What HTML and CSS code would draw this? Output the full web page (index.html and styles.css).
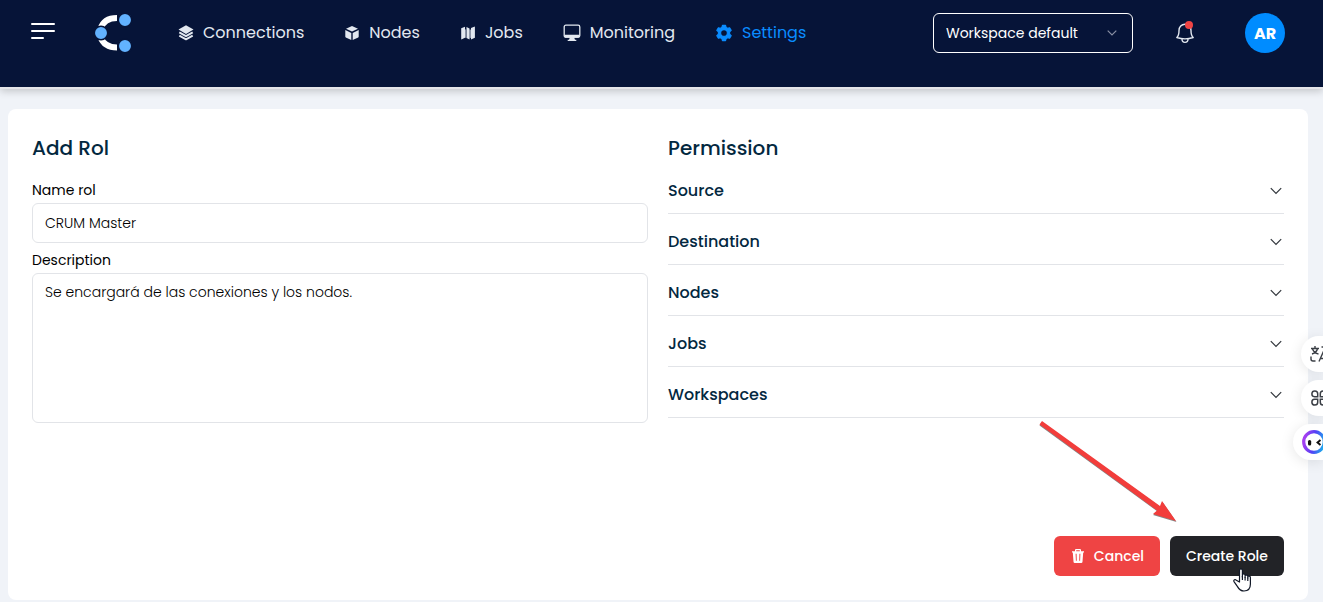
FILE: index.html
```html
<!DOCTYPE html>
<html lang="en">
<head>
<meta charset="utf-8">
<meta name="viewport" content="width=device-width, initial-scale=1">
<title>Add Rol</title>
<link rel="stylesheet" href="styles.css">
</head>
<body>
<header class="topbar">
  <button class="menu-btn" type="button" aria-label="Menu">
    <svg width="24" height="18" viewBox="0 0 24 18" fill="#fff"><rect width="24" height="2" rx="1" y="1"/><rect width="24" height="2" rx="1" y="8"/><rect width="13" height="2" rx="1" y="15"/></svg>
  </button>
  <a class="logo" href="#" aria-label="Home">
    <svg width="38" height="40" viewBox="0 0 38 40">
      <path d="M22 5C13 5 7.500 9 5.500 16M5.500 24C8 31 14 34.500 22 34.500" fill="none" stroke="#fff" stroke-width="6"/>
      <g fill="#62b2ff" stroke="#061438" stroke-width="1.500"><circle cx="30" cy="7" r="6.700"/><circle cx="6" cy="20" r="6.700"/><circle cx="30" cy="33" r="6.700"/></g>
    </svg>
  </a>
  <nav class="nav">
    <a class="nav-link" href="#">
      <svg width="16" height="16" viewBox="0 0 16 16"><path fill="currentColor" d="M8 .3 15.500 4.500 8 8.900.5 4.500z"/><path fill="none" stroke="currentColor" stroke-width="1.900" stroke-linejoin="round" d="M1.300 7.400 8 11.200l6.700-3.800M1.300 10.600 8 14.400l6.700-3.800"/></svg>
      <span>Connections</span>
    </a>
    <a class="nav-link" href="#">
      <svg width="16" height="16" viewBox="0 0 16 16" fill="currentColor"><path d="M8 1l6 2.800L8 6.600 2 3.800z"/><path d="M1.300 5l6 2.900V15l-5.500-2.600a1 1 0 0 1-.5-.9z"/><path d="M14.700 5l-6 2.900V15l5.500-2.600a1 1 0 0 0 .5-.9z"/></svg>
      <span>Nodes</span>
    </a>
    <a class="nav-link" href="#">
      <svg width="16" height="16" viewBox="0 0 16 16" fill="currentColor"><path d="M1.200 3.300 5 1.700v11L1.900 14.300a.5.5 0 0 1-.7-.5z"/><path opacity=".6" d="M5 4.200l1 .4V13l-1-.4z"/><path d="M6.500 1.900 9.500 3.500v11l-3-1.500z"/><path opacity=".6" d="M9.500 4.800l1.500-.4v8.400l-1.500.6z"/><path d="M11 3l3.200-1.300a.5.5 0 0 1 .7.5v10.600L11 14.400z"/></svg>
      <span>Jobs</span>
    </a>
    <a class="nav-link" href="#">
      <svg width="18" height="18" viewBox="0 0 18 18"><rect x="1.200" y="1.200" width="15.600" height="12" rx="1.700" fill="none" stroke="currentColor" stroke-width="1.300"/><path fill="currentColor" d="M1.500 10.700h15v1.500a1.500 1.500 0 0 1-1.500 1.500H3a1.500 1.500 0 0 1-1.500-1.500zM7 13h4l1 2.800h1.300V17H4.700v-1.200H6z"/></svg>
      <span>Monitoring</span>
    </a>
    <a class="nav-link nav-link-active" href="#">
      <svg width="18" height="18" viewBox="0 0 16 16"><path fill="currentColor" fill-rule="evenodd" stroke="currentColor" stroke-linejoin="round" d="M6.600 1.200h2.800l.5 1.800 1.300.8 1.800-.5 1.400 2.300-1.400 1.300v2.200l1.400 1.300-1.400 2.300-1.800-.5-1.300.8-.5 1.800H6.600L6.100 13l-1.300-.8-1.800.5-1.400-2.300L3 9.100V6.900L1.600 5.600 3 3.300l1.800.5L6.100 3zM8 5a3 3 0 1 0 0 6 3 3 0 0 0 0-6z"/></svg>
      <span>Settings</span>
    </a>
  </nav>
  <div class="select-wrap">
    <select class="workspace" aria-label="Workspace"><option>Workspace default</option></select>
    <svg class="select-arrow" width="10" height="6" viewBox="0 0 10 6"><path d="M.7.7 5 5 9.300.7" fill="none" stroke="#8990a4" stroke-width="1.200"/></svg>
  </div>
  <button class="bell" type="button" aria-label="Notifications">
    <svg width="20" height="22" viewBox="0 0 20 22" fill="none" stroke="#e2e8f0" stroke-width="1.400" stroke-linejoin="round" stroke-linecap="round"><path d="M1.800 15.500C4 13.500 4 12 4 8.500 4 5 6.500 2.300 10 2.300S16 5 16 8.500c0 3.500 0 5 2.200 7C13 17.300 7 17.300 1.800 15.500z"/><path d="M7 17c0 4.500 6 4.500 6 0"/></svg>
    <span class="bell-dot"></span>
  </button>
  <button class="avatar" type="button" aria-label="Account">AR</button>
</header>

<main class="card">
  <form class="form">
    <section>
      <h2 class="title">Add Rol</h2>
      <div class="field">
        <label class="label" for="name">Name rol</label>
        <input class="control" id="name" type="text" value="CRUM Master">
      </div>
      <div class="field">
        <label class="label" for="desc">Description</label>
        <textarea class="control control-area" id="desc" spellcheck="false">Se encargará de las conexiones y los nodos.</textarea>
      </div>
    </section>
    <section>
      <h2 class="title title-tight">Permission</h2>
      <button class="row" type="button"><span>Source</span><svg width="12" height="8" viewBox="0 0 12 8"><path d="M.8 1.200 6 6.400l5.200-5.200"/></svg></button>
      <button class="row" type="button"><span>Destination</span><svg width="12" height="8" viewBox="0 0 12 8"><path d="M.8 1.200 6 6.400l5.200-5.200"/></svg></button>
      <button class="row" type="button"><span>Nodes</span><svg width="12" height="8" viewBox="0 0 12 8"><path d="M.8 1.200 6 6.400l5.200-5.200"/></svg></button>
      <button class="row" type="button"><span>Jobs</span><svg width="12" height="8" viewBox="0 0 12 8"><path d="M.8 1.200 6 6.400l5.200-5.200"/></svg></button>
      <button class="row" type="button"><span>Workspaces</span><svg width="12" height="8" viewBox="0 0 12 8"><path d="M.8 1.200 6 6.400l5.200-5.200"/></svg></button>
    </section>
  </form>
  <div class="actions">
    <button class="btn btn-danger" type="button">
      <svg width="12" height="14" viewBox="0 0 12 14"><path fill="#fff" fill-rule="evenodd" d="M0 2.200h3V1.300C3 .5 3.500 0 4.300 0h3.400C8.500 0 9 .5 9 1.300v.9h3v1.200h-.8l-.7 9.400a1.300 1.300 0 0 1-1.300 1.200H2.800a1.300 1.300 0 0 1-1.300-1.200L.8 3.400H0zm4.200 0h3.600V1.200H4.200zM3.600 4.700l.3 7.100h.9l-.2-7.100zm3.800 0-.2 7.100h.9l.3-7.100z"/></svg>
      <span>Cancel</span>
    </button>
    <button class="btn btn-dark" type="button">Create Role</button>
  </div>
  <svg class="arrow" width="140" height="104" viewBox="0 0 140 104">
    <path fill="#868686" d="M4 2 122.500 87 124.500 82 138.500 102 115 95 119.500 91.500 1.500 5.500z"/>
    <path fill="#f23d3b" d="M4 1 122 86 124 81 138 101 115 94 119 90.500 1.500 4.500z"/>
  </svg>
  <svg class="pointer" width="20" height="24" viewBox="0 0 20 24"><path fill="#fff" stroke="#111827" stroke-width="1.200" stroke-linejoin="round" d="M6.500 14V2.500C6.500.4 9.400.4 9.400 2.500V9V7c0-1.400 2.700-1.300 2.700.2V9.200 8c0-1.400 2.700-1.200 2.700.3V10 9c0-1.300 2.600-1.100 2.600.4V16c0 4.500-2.500 7-6.400 7-3.500 0-5-1.600-6.500-4.400L1 13.600c-.8-1.700 1.200-2.600 2.300-1.400z"/><path stroke="#111827" stroke-width="1.200" d="M9.400 8v4M12.100 9v3.500M14.800 9.500v3.500"/></svg>
</main>

<aside class="dock" aria-label="Assistant">
  <button class="dock-btn" type="button" aria-label="Translate">
    <svg width="20" height="18" viewBox="0 0 20 18" fill="none" stroke="#3b3f46" stroke-width="1.400"><path d="M1 3.500h8M5 1v2.500M2 9c3.500-1 5-3 5.500-5.500M2.500 4C3.500 6.500 5.500 8.500 8.500 9M1 11.500V14c0 1.500.8 2 2 2h2.500M11.500 2H14c1.500 0 2 .7 2 2v2M9 16.500l4-9 4 9M10.500 13.500h5"/></svg>
  </button>
  <button class="dock-btn" type="button" aria-label="Apps">
    <svg width="18" height="18" viewBox="0 0 18 18" fill="none" stroke="#3b3f46" stroke-width="1.500"><path d="M7.700 7.700H4.500a2.900 2.900 0 1 1 3.200-2.900zM10.300 7.700h3.200a2.900 2.900 0 1 0-3.200-2.900zM7.700 10.300H4.500a2.900 2.900 0 1 0 3.200 2.900zM10.300 10.300h3.200a2.900 2.900 0 1 1-3.200 2.900z"/></svg>
  </button>
  <button class="dock-btn dock-btn-wide" type="button" aria-label="Chat">
    <svg width="24" height="24" viewBox="0 0 24 24"><defs><linearGradient id="ring" x1="0" y1=".6" x2="1" y2=".8"><stop offset="0" stop-color="#a33ff0"/><stop offset=".45" stop-color="#5340f5"/><stop offset="1" stop-color="#18b8ec"/></linearGradient></defs><circle cx="12" cy="12" r="10.300" fill="#fff" stroke="url(#ring)" stroke-width="3.200"/><rect x="6" y="10" width="3.200" height="5.500" rx="1.500" fill="#111"/><path d="M18.500 10 15.500 12.500l3 2.500" fill="none" stroke="#111" stroke-width="1.900"/></svg>
  </button>
</aside>
</body>
</html>
```
FILE: styles.css
```css
* { box-sizing: border-box; }

body {
  margin: 0;
  min-height: 100vh;
  background: #f0f3f8;
  color: #000;
  font-family: Poppins, Inter, "Liberation Sans", sans-serif;
  font-size: 14px;
  overflow-x: hidden;
}

button, input, select, textarea { font: inherit; color: inherit; }
button { border: 0; padding: 0; background: none; cursor: pointer; }
a { color: inherit; text-decoration: none; }
svg { display: block; flex: none; }

.topbar {
  display: flex;
  align-items: center;
  padding: 13px 38px 34px 31px;
  background: #061438;
  border-bottom: 2px solid #e4e5e9;
  box-shadow: 0 2px 8px rgba(0, 0, 0, .2);
}
.menu-btn { margin-bottom: 4px; }
.logo { margin-left: 40px; }

.nav {
  display: flex;
  gap: 40px;
  margin-left: 45px;
  color: #e2e8f0;
  font-size: 16px;
  line-height: 24px;
}
.nav-link { display: flex; align-items: center; gap: 9px; }
.nav-link-active { color: #0a8cff; }

.select-wrap { position: relative; width: 200px; margin-left: auto; }
.workspace {
  display: block;
  width: 100%;
  height: 40px;
  padding: 0 32px 0 12px;
  border: 1px solid #fff;
  border-radius: 6px;
  background: transparent;
  color: #fff;
  font-weight: 400;
  appearance: none;
}
.select-arrow { position: absolute; right: 16px; top: 17px; pointer-events: none; }

.bell { position: relative; margin-left: 42px; }
.bell-dot {
  position: absolute;
  top: -1px;
  right: 2px;
  width: 8px;
  height: 8px;
  border-radius: 50%;
  background: #ef4444;
}
.avatar {
  width: 40px;
  height: 40px;
  margin-left: 50px;
  border-radius: 50%;
  background: #008cff;
  color: #fff;
  font-size: 16px;
  font-weight: 700;
}

.card {
  position: relative;
  display: flex;
  flex-direction: column;
  min-height: calc(100vh - 111px);
  margin: 20px 15px 2px 8px;
  padding: 24px;
  border-radius: 8px;
  background: #fff;
}
.form { display: grid; grid-template-columns: 1fr 1fr; gap: 20px; }

.title {
  margin: 0 0 16px;
  color: #03283f;
  font-size: 20px;
  font-weight: 500;
  line-height: 30px;
}
.title-tight { margin-bottom: 0; }

.field { margin-top: 6px; }
.title + .field { margin-top: 0; }
.label { display: block; margin-bottom: 2px; font-weight: 400; line-height: 22px; }
.control {
  display: block;
  width: 100%;
  height: 40px;
  padding: 0 12px;
  border: 1px solid #e2e4e8;
  border-radius: 6px;
  background: #fff;
  font-weight: 300;
  outline: 0;
}
.control-area { height: 150px; padding: 8px 12px; line-height: 21px; resize: none; }

.row {
  display: flex;
  align-items: center;
  justify-content: space-between;
  width: 100%;
  padding: 16px 2px 10px 0;
  border-bottom: 1px solid #e2e4e8;
  color: #03283f;
  font-size: 16px;
  font-weight: 500;
  line-height: 24px;
}
.row path { fill: none; stroke: #30353b; stroke-width: 1.2; }

.actions { display: flex; justify-content: flex-end; gap: 10px; margin-top: auto; padding-top: 24px; }
.btn {
  display: flex;
  align-items: center;
  justify-content: center;
  gap: 10px;
  height: 40px;
  padding: 0 16px;
  border-radius: 6px;
  color: #fff;
  font-weight: 500;
}
.btn-danger { min-width: 106px; padding-left: 18px; background: #ef4444; }
.btn-dark { min-width: 114px; background: #222327; }

.arrow { position: absolute; right: 130px; bottom: 76px; pointer-events: none; }
.pointer { position: absolute; right: 55px; bottom: 8px; pointer-events: none; }

.dock {
  position: fixed;
  top: 336px;
  right: 0;
  display: flex;
  flex-direction: column;
  align-items: flex-end;
  gap: 8px;
}
.dock-btn {
  display: flex;
  align-items: center;
  width: 22px;
  height: 36px;
  padding-left: 9px;
  border-radius: 18px 0 0 18px;
  background: #fff;
  box-shadow: 0 2px 14px rgba(0, 0, 0, .1);
  overflow: hidden;
}
.dock-btn-wide { width: 30px; }
```
